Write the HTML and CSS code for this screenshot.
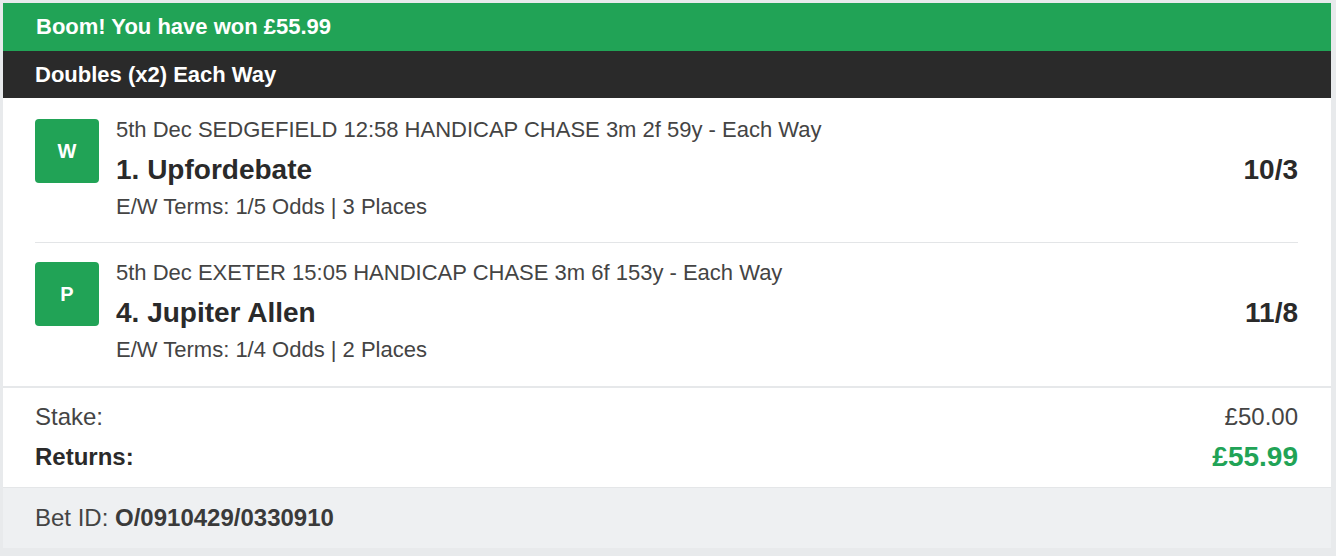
FILE: index.html
```html
<!DOCTYPE html>
<html>
<head>
<meta charset="utf-8">
<link rel="stylesheet" href="styles.css">
</head>
<body>
<div class="card">
  <div class="banner">Boom! You have won £55.99</div>
  <div class="title">Doubles (x2) Each Way</div>
  <div class="legs">
    <div class="leg">
      <div class="badge">W</div>
      <div class="info">
        <div class="event">5th Dec SEDGEFIELD 12:58 HANDICAP CHASE 3m 2f 59y - Each Way</div>
        <div class="row">
          <span class="name">1. Upfordebate</span>
          <span class="odds">10/3</span>
        </div>
        <div class="terms">E/W Terms: 1/5 Odds | 3 Places</div>
      </div>
    </div>
    <div class="leg">
      <div class="badge">P</div>
      <div class="info">
        <div class="event">5th Dec EXETER 15:05 HANDICAP CHASE 3m 6f 153y - Each Way</div>
        <div class="row">
          <span class="name">4. Jupiter Allen</span>
          <span class="odds">11/8</span>
        </div>
        <div class="terms">E/W Terms: 1/4 Odds | 2 Places</div>
      </div>
    </div>
  </div>
  <div class="summary">
    <div class="sumrow stake"><span>Stake:</span><span>£50.00</span></div>
    <div class="sumrow returns"><span>Returns:</span><span class="ret">£55.99</span></div>
  </div>
  <div class="betid">Bet ID: <b>O/0910429/0330910</b></div>
</div>
</body>
</html>
```
FILE: styles.css
```css
html, body {
  margin: 0;
  padding: 0;
}
body {
  background: #e8eaec;
  padding: 3px 5px 0 3px;
  font-family: "Liberation Sans", Arial, sans-serif;
  color: #444;
}
.card {
  width: 1328px;
  background: #fff;
}
.banner {
  background: #21a356;
  color: #fff;
  font-weight: bold;
  font-size: 22px;
  height: 48px;
  line-height: 47px;
  padding-left: 33px;
}
.title {
  background: #2a2a2a;
  color: #fff;
  font-weight: bold;
  font-size: 22px;
  height: 47px;
  line-height: 47px;
  padding-left: 32px;
}
.legs {
  padding: 0 33px 0 32px;
}
.leg {
  display: flex;
  gap: 17px;
  height: 144px;
  box-sizing: border-box;
  padding-top: 21px;
}
.leg + .leg {
  border-top: 1px solid #e3e5e7;
  height: 144px;
  padding-top: 19px;
}
.badge {
  width: 64px;
  height: 64px;
  flex: none;
  border-radius: 4px;
  background: #21a356;
  color: #fff;
  font-weight: bold;
  font-size: 20px;
  display: flex;
  align-items: center;
  justify-content: center;
}
.info {
  flex: 1;
}
.event {
  font-size: 22px;
  line-height: 22px;
  color: #444;
}
.row {
  display: flex;
  justify-content: space-between;
  align-items: center;
  margin-top: 13px;
  height: 32px;
}
.name, .odds {
  font-weight: bold;
  font-size: 28px;
  color: #2a2a2a;
}
.terms {
  font-size: 22px;
  line-height: 24px;
  margin-top: 9px;
  color: #444;
}
.summary {
  border-top: 2px solid #e6e8ea;
  padding: 14px 33px 5px 32px;
}
.sumrow {
  display: flex;
  justify-content: space-between;
  align-items: center;
  font-size: 24px;
}
.stake {
  height: 30px;
  color: #444;
}
.returns {
  height: 50px;
  font-weight: bold;
  color: #2a2a2a;
}
.returns .ret {
  font-size: 28px;
  color: #21a356;
}
.betid {
  background: #eef0f2;
  height: 60px;
  line-height: 60px;
  padding-left: 32px;
  font-size: 24px;
  color: #444;
  border-top: 1px solid #e4e6e8;
}
.betid b {
  color: #3a3a3a;
}
```
